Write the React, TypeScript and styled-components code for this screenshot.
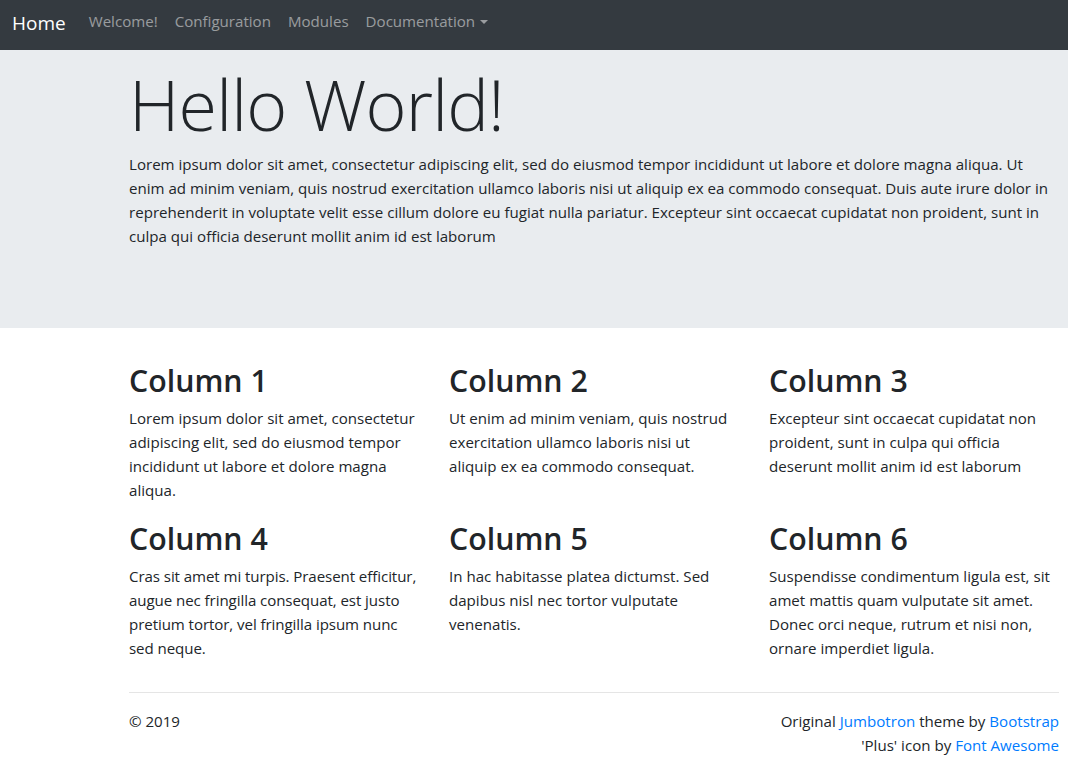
import React from "react";
import styled, { createGlobalStyle } from "styled-components";

const Global = createGlobalStyle`
  html, body { margin: 0; padding: 0; overflow: hidden; background: #fff; }
  body { font-family: "Open Sans", "Noto Sans", sans-serif; font-size: 15.1px; line-height: 24px; color: #212529; }
  * { box-sizing: border-box; }
`;
const Nav = styled.nav`
  height: 50px; background: #343a40; display: flex; align-items: center; padding: 0 16px 6px 12px;
`;
const Brand = styled.a`
  font-size: 19px; color: #fff; margin-right: 14.5px; padding-top: 2px;
`;
const NavLink = styled.a<{ $caret?: boolean }>`
  color: rgba(255,255,255,.5); padding: 0 8.5px 2px; font-size: 15.1px; white-space: nowrap;
  ${p => p.$caret ? `&::after { content: ""; display: inline-block; margin-left: 5px; vertical-align: 3px; border-top: 4.8px solid; border-left: 4.8px solid transparent; border-right: 4.8px solid transparent; }` : ""}
`;
const Jumbo = styled.section`
  height: 278px; background: #e9ecef; padding-top: 11px;
`;
const Container = styled.div`
  width: 930px; margin-left: 129px;
`;
const Display = styled.h1`
  margin: 0 0 5px; font-size: 70px; line-height: 86px; font-weight: 300; letter-spacing: -0.8px;
`;
const Para = styled.p<{ $tight?: boolean }>`
  margin: 0;
  letter-spacing: ${p => (p.$tight ? "-0.08px" : "normal")};
`;
const Grid = styled.div`
  display: grid; grid-template-columns: repeat(3, 290px); column-gap: 30px; padding-top: 32px; padding-bottom: 16px;
`;
const Col = styled.div`
  height: 158px;
`;
const Heading = styled.h2`
  margin: 0 0 8px; padding-top: 2px; height: 38px; font-size: 30.3px; line-height: 38px; font-weight: 600;
`;
const Rule = styled.hr`
  margin: 0; border: 0; border-top: 1px solid rgba(0,0,0,.1);
`;
const Footer = styled.footer`
  display: flex; justify-content: space-between; padding-top: 16px;
`;
const Right = styled.div` text-align: right; `;
const Link = styled.a` color: #007bff; `;

const cols = [
  ["Column 1", "Lorem ipsum dolor sit amet, consectetur adipiscing elit, sed do eiusmod tempor incididunt ut labore et dolore magna aliqua."],
  ["Column 2", "Ut enim ad minim veniam, quis nostrud exercitation ullamco laboris nisi ut aliquip ex ea commodo consequat."],
  ["Column 3", "Excepteur sint occaecat cupidatat non proident, sunt in culpa qui officia deserunt mollit anim id est laborum"],
  ["Column 4", "Cras sit amet mi turpis. Praesent efficitur, augue nec fringilla consequat, est justo pretium tortor, vel fringilla ipsum nunc sed neque."],
  ["Column 5", "In hac habitasse platea dictumst. Sed dapibus nisl nec tortor vulputate venenatis."],
  ["Column 6", "Suspendisse condimentum ligula est, sit amet mattis quam vulputate sit amet. Donec orci neque, rutrum et nisi non, ornare imperdiet ligula."],
];

export default function App() {
  return (
    <>
      <Global />
      <Nav>
        <Brand>Home</Brand>
        <NavLink>Welcome!</NavLink>
        <NavLink>Configuration</NavLink>
        <NavLink>Modules</NavLink>
        <NavLink $caret>Documentation</NavLink>
      </Nav>
      <Jumbo>
        <Container>
          <Display>Hello World!</Display>
          <Para>Lorem ipsum dolor sit amet, consectetur adipiscing elit, sed do eiusmod tempor incididunt ut labore et dolore magna aliqua. Ut enim ad minim veniam, quis nostrud exercitation ullamco laboris nisi ut aliquip ex ea commodo consequat. Duis aute irure dolor in reprehenderit in voluptate velit esse cillum dolore eu fugiat nulla pariatur. Excepteur sint occaecat cupidatat non proident, sunt in culpa qui officia deserunt mollit anim id est laborum</Para>
        </Container>
      </Jumbo>
      <Container>
        <Grid>
          {cols.map(([h, t]) => (
            <Col key={h}>
              <Heading>{h}</Heading>
              <Para $tight={h === "Column 4"}>{t}</Para>
            </Col>
          ))}
        </Grid>
        <Rule />
        <Footer>
          <div>© 2019</div>
          <Right>
            Original <Link>Jumbotron</Link> theme by <Link>Bootstrap</Link><br />
            'Plus' icon by <Link>Font Awesome</Link>
          </Right>
        </Footer>
      </Container>
    </>
  );
}
